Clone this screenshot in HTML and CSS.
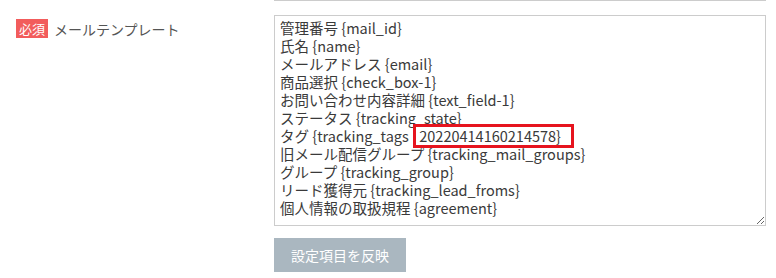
FILE: index.html
```html
<!DOCTYPE html>
<html lang="ja">
<head>
<meta charset="utf-8">
<link rel="stylesheet" href="styles.css">
</head>
<body>
<div class="row">
  <div class="label">
    <span class="badge">必須</span>
    <span class="label-text">メールテンプレート</span>
  </div>
  <div class="field">
    <div class="prev-line"></div>
    <div class="area-wrap">
      <textarea class="template">管理番号 {mail_id}
氏名 {name}
メールアドレス {email}
商品選択 {check_box-1}
お問い合わせ内容詳細 {text_field-1}
ステータス {tracking_state}
タグ {tracking_tags &ensp;20220414160214578}
旧メール配信グループ {tracking_mail_groups}
グループ {tracking_group}
リード獲得元 {tracking_lead_froms}
個人情報の取扱規程 {agreement}</textarea>
      <div class="highlight"></div>
    </div>
    <button class="apply">設定項目を反映</button>
  </div>
</div>
</body>
</html>
```

FILE: styles.css
```css
html, body {
  margin: 0;
  padding: 0;
  background: #fff;
}
body {
  font-family: "Noto Sans CJK JP", "Noto Sans", sans-serif;
  color: #3a3a3a;
}
.row {
  display: flex;
}
.label {
  width: 258px;
  padding-left: 16px;
  padding-top: 19px;
  display: flex;
  align-items: center;
  align-self: flex-start;
  gap: 6px;
  height: 19px;
}
.badge {
  display: inline-flex;
  align-items: center;
  justify-content: center;
  width: 32px;
  height: 19px;
  background: #f25c5c;
  color: #fff;
  font-size: 13px;
  line-height: 1;
}
.label-text {
  font-size: 14px;
  color: #555;
  line-height: 1;
}
.field {
  width: 492px;
  display: flex;
  flex-direction: column;
}
.prev-line {
  height: 1px;
  border-top: 1px solid #ccc;
  width: 492px;
}
.area-wrap {
  position: relative;
  margin-top: 13px;
}
.template {
  display: block;
  box-sizing: border-box;
  width: 492px;
  height: 211px;
  margin: 0;
  border: 1px solid #ccc;
  border-radius: 0;
  padding: 3px 5px;
  font-family: "Noto Sans CJK JP", "Noto Sans", sans-serif;
  font-size: 14.5px;
  line-height: 18px;
  color: #3a3a3a;
  background: #fff;
  overflow: hidden;
  resize: both;
  outline: none;
}
.highlight {
  position: absolute;
  left: 139px;
  top: 109px;
  width: 155px;
  height: 18px;
  border: 3px solid #e6141e;
  pointer-events: none;
}
.apply {
  margin-top: 12px;
  width: 132px;
  height: 34px;
  border: none;
  border-radius: 0;
  background: #aab7c0;
  color: #fff;
  font-family: "Noto Sans CJK JP", "Noto Sans", sans-serif;
  font-size: 14px;
  padding: 0;
}
```
